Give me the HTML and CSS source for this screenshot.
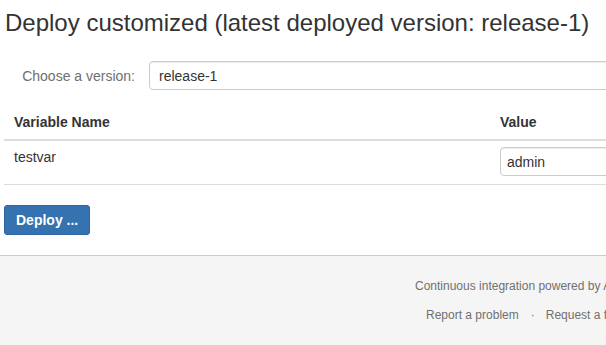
FILE: index.html
```html
<!DOCTYPE html>
<html lang="en">
<head>
  <meta charset="UTF-8" />
  <meta name="viewport" content="width=device-width, initial-scale=1.0"/>
  <title>Deploy customized</title>
  <link rel="stylesheet" href="styles.css">
</head>
<body>

  <div class="page">
    <h1>Deploy customized (latest deployed version: release-1)</h1>

    <form class="deploy-form">
      <div class="form-row">
        <label for="version">Choose a version:</label>
        <input id="version" class="text-input version-input" type="text" value="release-1">
      </div>

      <table class="vars">
        <thead>
          <tr>
            <th class="col-name">Variable Name</th>
            <th class="col-value">Value</th>
          </tr>
        </thead>
        <tbody>
          <tr>
            <td>testvar</td>
            <td><input class="text-input value-input" type="text" value="admin"></td>
          </tr>
        </tbody>
      </table>

      <button type="button" class="btn-primary">Deploy ...</button>
    </form>
  </div>

  <footer class="footer">
    <div class="footer-inner">
      <p class="powered">Continuous integration powered by Atlassian Bamboo version 6.2.1 build 60209</p>
      <ul class="footer-links">
        <li>Report a problem</li>
        <li>Request a feature</li>
        <li>Contact Atlassian</li>
        <li>Contact Administrators</li>
      </ul>
    </div>
  </footer>

</body>
</html>
```

FILE: styles.css
```css
html, body {
  margin: 0;
  overflow: hidden;
}

body {
  font-family: "Liberation Sans", Arial, sans-serif;
  font-size: 14px;
  color: #333;
  background: #fff;
  width: 1100px;
}

.page {
  padding: 0 4px 20px 4px;
}

h1 {
  font-size: 24px;
  font-weight: normal;
  margin: 0;
  padding: 8px 0 0 1px;
  line-height: 30px;
}

.deploy-form {
  margin-top: 23px;
}

.form-row {
  display: flex;
  align-items: center;
  margin-bottom: 14px;
}

.form-row label {
  width: 131px;
  text-align: right;
  color: #707070;
  padding-right: 14px;
}

.text-input {
  font-family: inherit;
  font-size: 14px;
  color: #333;
  border: 1px solid #ccc;
  border-radius: 4px;
  box-shadow: inset 0 1px 1px rgba(0, 0, 0, 0.075);
  padding: 0 6px;
  box-sizing: border-box;
  height: 29px;
}

.version-input {
  width: 700px;
  padding: 0 9px;
}

.value-input {
  width: 400px;
}

.vars {
  width: 1000px;
  border-collapse: collapse;
}

.vars th {
  text-align: left;
  font-weight: bold;
  padding: 8px 10px 7px 10px;
  line-height: 20px;
  border-bottom: 2px solid #ddd;
}

.vars td {
  padding: 6px 10px 8px 10px;
  border-bottom: 1px solid #ddd;
  vertical-align: top;
  line-height: 20px;
}

.vars .col-name {
  width: 476px;
}

.vars td:last-child,
.vars th:last-child {
  padding-left: 0;
}

.btn-primary {
  margin-top: 20px;
  font-family: inherit;
  font-size: 14px;
  font-weight: bold;
  color: #fff;
  background: #3572b0;
  border: 1px solid #2e64a0;
  border-radius: 3px;
  height: 30px;
  padding: 0 11px;
}

.footer {
  background: #f5f5f5;
  border-top: 1px solid #ccc;
  height: 200px;
  font-size: 12px;
  color: #707070;
}

.footer-inner {
  padding: 22px 0 0 415px;
  white-space: nowrap;
}

.powered {
  margin: 0 0 13px 0;
  line-height: 16px;
}

.footer-links {
  list-style: none;
  margin: 0;
  padding: 0 0 0 11px;
  display: flex;
  line-height: 16px;
}

.footer-links li + li::before {
  content: "·";
  padding: 0 11px 0 12px;
}
```
